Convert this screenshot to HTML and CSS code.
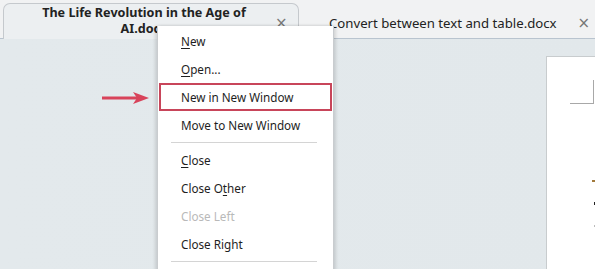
FILE: index.html
```html
<!DOCTYPE html>
<html>
<head>
<meta charset="utf-8">
<link rel="stylesheet" href="styles.css">
</head>
<body>
<div class="app">
  <div class="tabbar">
    <div class="tab active">
      <span class="tab-title">The Life Revolution in the Age of AI.docx</span>
      <span class="tab-close">×</span>
    </div>
    <div class="tab inactive">
      <span class="tab-title">Convert between text and table.docx</span>
      <span class="tab-close">×</span>
    </div>
  </div>
  <div class="workspace">
    <div class="page">
      <div class="corner"></div>
      <div class="mark brown"></div>
      <div class="mark black"></div>
      <div class="mark gray"></div>
    </div>
  </div>

  <svg class="arrow" width="48" height="12" viewBox="0 0 48 12">
    <line x1="0" y1="6" x2="36" y2="6" stroke="#d8435a" stroke-width="3"/>
    <polygon points="31,0 47,6 31,12 35,6" fill="#d8435a"/>
  </svg>

  <div class="menu">
    <div class="item"><u>N</u>ew</div>
    <div class="item"><u>O</u>pen...</div>
    <div class="item selected">New in New Window</div>
    <div class="item">Move to New Window</div>
    <div class="sep"></div>
    <div class="item"><u>C</u>lose</div>
    <div class="item">Close O<u>t</u>her</div>
    <div class="item disabled">Close Left</div>
    <div class="item">Close Right</div>
    <div class="sep"></div>
  </div>
</div>
</body>
</html>
```
FILE: styles.css
```css
* { box-sizing: border-box; }
html, body { margin: 0; padding: 0; }
body {
  width: 595px;
  height: 269px;
  overflow: hidden;
  font-family: "Noto Sans", "Open Sans", sans-serif;
  background: #e3e9ec;
}
.app {
  position: relative;
  width: 595px;
  height: 269px;
  display: flex;
  flex-direction: column;
}
.tabbar {
  height: 39px;
  background: #f1f2f3;
  border-bottom: 1px solid #b9c4cf;
  display: flex;
  align-items: flex-end;
  padding-left: 3px;
}
.tab {
  display: flex;
  align-items: center;
  height: 35px;
  position: relative;
}
.tab.active {
  width: 296px;
  background: #eceff1;
  border: 1px solid #c5c9cd;
  border-bottom: none;
  border-radius: 7px 7px 0 0;
  margin-bottom: -1px;
  height: 36px;
}
.tab.active .tab-title {
  font-weight: bold;
  font-size: 12.6px;
  line-height: 16px;
  color: #222;
  text-align: center;
  width: 240px;
  margin-left: 20px;
  padding-bottom: 1px;
}
.tab.active .tab-close {
  position: absolute;
  left: 271px;
  top: 10px;
}
.tab-close {
  font-size: 15px;
  color: #777;
  font-family: "DejaVu Sans", sans-serif;
  font-weight: normal;
}
.tab.inactive {
  padding-left: 30px;
  padding-top: 4px;
  flex: 1;
}
.tab.inactive .tab-title {
  font-size: 13.2px;
  color: #222;
}
.tab.inactive .tab-close {
  margin-left: 21px;
}
.workspace {
  flex: 1;
  display: flex;
  justify-content: flex-end;
  padding-top: 17px;
  background: linear-gradient(to right, #e3e9ec, #e2e8eb);
}
.page {
  width: 49px;
  background: #fff;
  border-left: 1px solid #c8ccce;
  border-top: 1px solid #c8ccce;
  position: relative;
}
.corner {
  position: absolute;
  left: 23px;
  top: 23px;
  width: 24px;
  height: 24px;
  border-right: 1px solid #a8a8a8;
  border-bottom: 1px solid #a8a8a8;
}
.mark {
  position: absolute;
  height: 2px;
}
.mark.brown { left: 45px; top: 123px; width: 4px; background: #a27a3c; }
.mark.black { left: 47px; top: 145px; width: 2px; height: 3px; background: #222; }
.mark.gray { left: 47px; top: 168px; width: 2px; background: #bbb; }

.arrow {
  position: absolute;
  left: 102px;
  top: 92px;
}
.menu {
  position: absolute;
  left: 157px;
  top: 26px;
  width: 177px;
  height: 250px;
  background: #fff;
  border-left: 1px solid #c9cccf;
  border-right: 1px solid #c9cccf;
  box-shadow: -2px 0 3px rgba(0,0,0,0.12), 2px 0 3px rgba(0,0,0,0.12);
  padding-top: 1px;
}
.item {
  height: 28px;
  line-height: 28px;
  padding-left: 23px;
  font-size: 11.7px;
  color: #1e1e1e;
  white-space: nowrap;
}
.item u { text-decoration-thickness: 1px; text-underline-offset: 2px; }
.item.selected {
  margin: 0 1px;
  padding-left: 20px;
  border: 2px solid #c8455a;
  line-height: 24px;
}
.item.disabled { color: #b9b9b9; }
.sep {
  height: 1px;
  background: #d4d4d4;
  margin: 3px 16px 3px 13px;
}
```
